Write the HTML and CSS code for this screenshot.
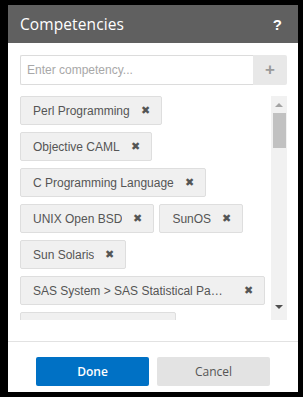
FILE: index.html
```html
<!DOCTYPE html>
<html lang="en">
<head>
    <meta charset="UTF-8">
    <meta name="viewport" content="width=device-width, initial-scale=1.0">
    <title>Competencies</title>
    <link rel="stylesheet" href="styles.css">
</head>
<body>
    <div class="modal">
        <div class="modal-header">
            <h2>Competencies</h2>
            <span class="help">?</span>
        </div>
        <div class="modal-body">
            <div class="input-group">
                <input type="text" placeholder="Enter competency...">
                <button class="add">+</button>
            </div>
            <div class="list-wrap">
                <div class="tags">
                    <div class="tag"><span class="label">Perl Programming</span><span class="remove">&#10006;</span></div>
                    <div class="tag"><span class="label">Objective CAML</span><span class="remove">&#10006;</span></div>
                    <div class="tag"><span class="label">C Programming Language</span><span class="remove">&#10006;</span></div>
                    <div class="tag"><span class="label">UNIX Open BSD</span><span class="remove">&#10006;</span></div>
                    <div class="tag"><span class="label">SunOS</span><span class="remove">&#10006;</span></div>
                    <div class="tag"><span class="label">Sun Solaris</span><span class="remove">&#10006;</span></div>
                    <div class="tag long"><span class="label">SAS System &gt; SAS Statistical Package</span><span class="remove">&#10006;</span></div>
                    <div class="tag"><span class="label">Microsoft Visual C++</span><span class="remove">&#10006;</span></div>
                </div>
                <div class="scrollbar">
                    <span class="arrow up"></span>
                    <div class="track"><div class="thumb"></div></div>
                    <span class="arrow down"></span>
                </div>
            </div>
        </div>
        <div class="modal-footer">
            <button class="btn done">Done</button>
            <button class="btn cancel">Cancel</button>
        </div>
    </div>
</body>
</html>
```

FILE: styles.css
```css
* {
    margin: 0;
    padding: 0;
    box-sizing: border-box;
}

body {
    background: #fff;
    font-family: "Liberation Sans", Arial, sans-serif;
}

.modal {
    width: 303px;
    height: 397px;
    border-style: solid;
    border-color: #000;
    border-width: 5px 5px 5px 8px;
    background: #fff;
    display: flex;
    flex-direction: column;
}

.modal-header {
    height: 38px;
    background: #606060;
    color: #fff;
    display: flex;
    align-items: center;
    justify-content: space-between;
    padding: 0 16px 0 12px;
}

.modal-header h2 {
    font-family: "Open Sans", sans-serif;
    font-weight: 500;
    font-size: 15.5px;
    letter-spacing: 0.1px;
}

.help {
    font-family: "Liberation Sans", Arial, sans-serif;
    font-weight: 700;
    font-size: 15px;
}

.modal-body {
    padding: 12px 11px 0 12px;
}

.input-group {
    display: flex;
    height: 30px;
}

.input-group input {
    flex: 1;
    border: 1px solid #dcdcdc;
    border-right: none;
    border-radius: 2px 0 0 2px;
    padding: 0 6px;
    font-family: "Liberation Sans", Arial, sans-serif;
    font-size: 12px;
    color: #444;
    outline: none;
}

.input-group input::placeholder {
    color: #a8a8a8;
}

.add {
    width: 34px;
    border: none;
    background: #e8e8e8;
    border-radius: 0 2px 2px 0;
    color: #9a9a9a;
    font-family: "Liberation Sans", Arial, sans-serif;
    font-size: 17px;
    font-weight: 700;
}

.list-wrap {
    margin-top: 11px;
    height: 224px;
    display: flex;
    gap: 3px;
    overflow: hidden;
}

.tags {
    flex: 1;
    min-width: 0;
    display: flex;
    flex-wrap: wrap;
    align-content: flex-start;
    gap: 7px 5px;
}

.tag {
    display: flex;
    align-items: center;
    height: 29px;
    padding: 0 11px 0 12px;
    background: #f0f0f0;
    border: 1px solid #dedede;
    border-radius: 2px;
    color: #555;
    font-size: 12px;
    max-width: 245px;
}

.tag .label {
    white-space: nowrap;
    overflow: hidden;
    text-overflow: ellipsis;
}

.tag.long {
    width: 245px;
}

.tag.long .label {
    flex: 1;
    padding-right: 6px;
}

.remove {
    margin-left: 11px;
    font-size: 11px;
    color: #555;
}

.scrollbar {
    width: 16px;
    background: #f1f1f1;
    display: flex;
    flex-direction: column;
    align-items: center;
}

.arrow {
    width: 0;
    height: 0;
    border-left: 4px solid transparent;
    border-right: 4px solid transparent;
}

.arrow.up {
    margin-top: 7px;
    border-bottom: 4px solid #a3a3a3;
}

.arrow.down {
    margin-bottom: 11px;
    border-top: 4px solid #505050;
}

.track {
    flex: 1;
    width: 100%;
    padding: 6px 1px 0 2px;
}

.thumb {
    height: 35px;
    background: #c1c1c1;
}

.modal-footer {
    margin-top: 21px;
    border-top: 1px solid #e2e2e2;
    display: flex;
    justify-content: center;
    gap: 8px;
    padding-top: 15px;
}

.btn {
    width: 113px;
    height: 29px;
    border: none;
    border-radius: 2px;
    font-family: "Open Sans", sans-serif;
    font-size: 12px;
}

.done {
    background: #0071c5;
    color: #fff;
    font-weight: 600;
}

.cancel {
    background: #e3e3e3;
    color: #555;
}
```
